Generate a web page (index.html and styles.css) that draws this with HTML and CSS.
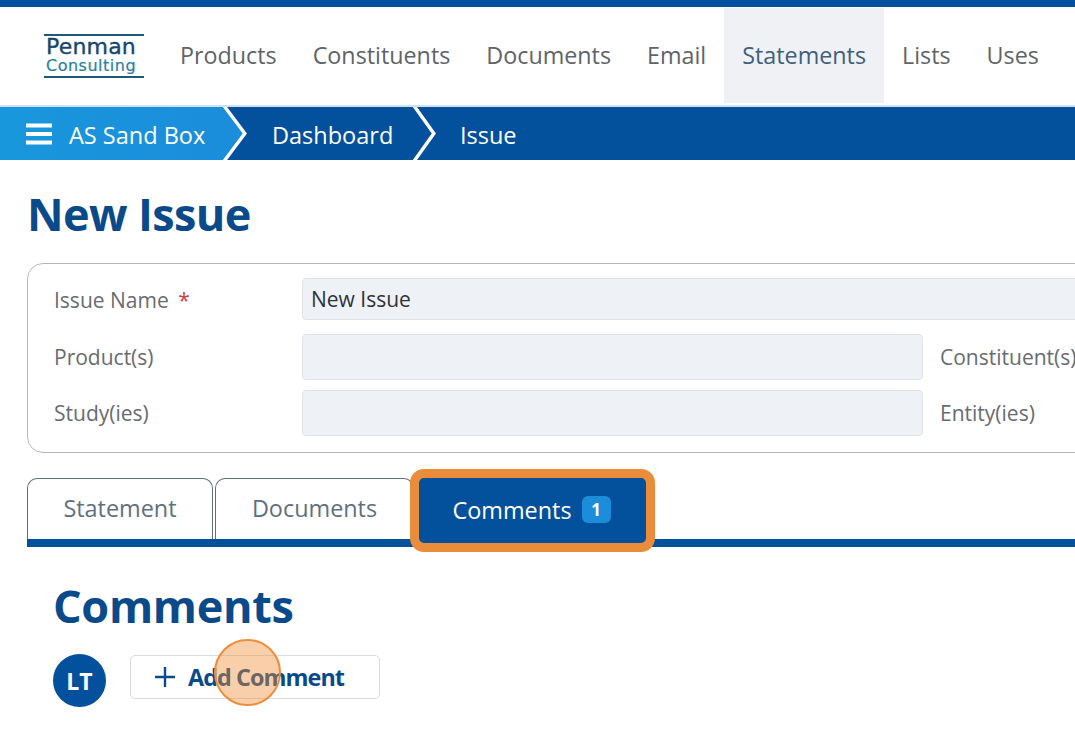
FILE: index.html
```html
<!DOCTYPE html>
<html lang="en">
<head>
<meta charset="utf-8">
<title>New Issue</title>
<link rel="stylesheet" href="styles.css">
</head>
<body>
<div class="page">
  <div class="topbar"></div>
  <header class="header">
    <div class="logo">
      <span class="logo-main">Penman</span>
      <span class="logo-sub">Consulting</span>
    </div>
    <nav class="nav">
      <a class="nav-item">Products</a>
      <a class="nav-item">Constituents</a>
      <a class="nav-item">Documents</a>
      <a class="nav-item">Email</a>
      <a class="nav-item active">Statements</a>
      <a class="nav-item">Lists</a>
      <a class="nav-item">Uses</a>
    </nav>
  </header>
  <div class="crumbs">
    <div class="crumb crumb-home">
      <svg class="burger" width="26" height="22" viewBox="0 0 26 22"><path d="M0 2.500h26M0 11h26M0 19.500h26" stroke="#fff" stroke-width="4" fill="none"/></svg>
      <span>AS Sand Box</span>
      <svg class="chev" width="26" height="54" viewBox="0 0 26 54"><path d="M0 0L0 54L3 54L23 27L3 0Z" fill="#1b8ddb"/><path d="M2 -1L23 27L2 55" stroke="#fff" stroke-width="3.500" fill="none"/></svg>
    </div>
    <div class="crumb crumb-mid">
      <span>Dashboard</span>
      <svg class="chev" width="26" height="54" viewBox="0 0 26 54"><path d="M2 -1L22 27L2 55" stroke="#fff" stroke-width="3.500" fill="none"/></svg>
    </div>
    <div class="crumb crumb-last"><span>Issue</span></div>
  </div>
  <main class="main">
    <h1 class="title">New Issue</h1>
    <section class="card">
      <div class="row row-name">
        <label class="label">Issue Name <span class="req">*</span></label>
        <div class="input input-name">New Issue</div>
      </div>
      <div class="row">
        <label class="label">Product(s)</label>
        <div class="input input-half"></div>
        <label class="label label-right">Constituent(s)</label>
      </div>
      <div class="row">
        <label class="label">Study(ies)</label>
        <div class="input input-half"></div>
        <label class="label label-right">Entity(ies)</label>
      </div>
    </section>
    <div class="tabs">
      <div class="tab tab-statement">Statement</div>
      <div class="tab tab-documents">Documents</div>
      <div class="tab tab-active">Comments <span class="badge">1</span></div>
    </div>
    <section class="comments">
      <h2 class="comments-title">Comments</h2>
      <div class="comment-row">
        <div class="avatar">LT</div>
        <button class="add-btn">
          <svg width="22" height="22" viewBox="0 0 22 22"><path d="M11 1v20M1 11h20" stroke="#0b4a8a" stroke-width="2.400" fill="none"/></svg>
          <span>Add Comment</span>
        </button>
        <div class="click-dot"></div>
      </div>
    </section>
  </main>
</div>
</body>
</html>
```

FILE: styles.css
```css
* { box-sizing: border-box; }
html, body { margin: 0; padding: 0; }
body {
  width: 1075px;
  height: 733px;
  overflow: hidden;
  background: #fff;
  font-family: "Open Sans", "Liberation Sans", sans-serif;
}
.page { width: 1075px; height: 733px; overflow: hidden; }
.topbar { height: 7px; background: #03519c; }
.header {
  height: 98px;
  display: flex;
  align-items: stretch;
  padding-left: 44px;
  background: #fff;
  white-space: nowrap;
}
.logo {
  width: 100px;
  height: 44px;
  margin-top: 27px;
  padding-left: 2px;
  border-top: 2px solid #1d5a78;
  border-bottom: 2px solid #1d5a78;
  display: flex;
  flex-direction: column;
  align-items: flex-start;
  font-family: "DejaVu Sans", sans-serif;
}
.logo-main { font-size: 22px; line-height: 20px; height: 20px; color: #17466f; margin-top: 1px; letter-spacing: .2px; -webkit-text-stroke: .35px #17466f; }
.logo-sub { font-size: 16px; line-height: 18px; height: 18px; color: #2a7f9e; letter-spacing: .5px; -webkit-text-stroke: .2px #2a7f9e; }
.nav { display: flex; margin-left: 18px; }
.nav-item {
  font-size: 23.300px;
  color: #5f6468;
  padding: 0 18px 2px;
  display: flex;
  align-items: center;
  height: 95px;
  margin-top: 1px;
}
.nav-item.active { background: #eff1f5; color: #3f5f7d; }
.crumbs {
  height: 55px;
  border-top: 2px solid #cfe2f3;
  display: flex;
  background: #03519c;
  color: #fff;
  font-size: 23.500px;
  white-space: nowrap;
}
.crumb { display: flex; align-items: center; height: 53px; }
.crumb span { position: relative; top: 1px; }
.crumb-home { width: 248px; padding-left: 26px; background: linear-gradient(90deg, #1897dc 0%, #1b8ddb 100%); background-size: 224px 100%; background-repeat: no-repeat; background-color: #03519c; position: relative; }
.burger { margin-right: 17px; }
.chev { position: absolute; top: 0; height: 53px; }
.crumb-home .chev { left: 222px; }
.crumb-mid { width: 188px; padding-left: 24px; position: relative; }
.crumb-mid .chev { left: 164px; }
.crumb-last { padding-left: 24px; }
.main { padding: 0 0 0 27px; width: 1200px; }
.title {
  margin: 24px 0 0;
  height: 60px;
  line-height: 60px;
  font-size: 45px;
  font-weight: 700;
  color: #0b4a8a;
  letter-spacing: -.6px;
}
.card {
  margin-top: 19px;
  width: 1160px;
  height: 190px;
  border: 1.500px solid #b5b9bd;
  border-radius: 16px;
  padding: 14px 0 0 26px;
  display: flex;
  flex-direction: column;
  gap: 10px;
}
.row { display: flex; align-items: center; height: 46px; }
.row-name { height: 42px; margin-bottom: 4px; }
.label { width: 248px; flex: none; font-size: 21px; color: #686c70; white-space: nowrap; }
.row-name .label { padding-top: 2px; }
.req { color: #c9413f; margin-left: 4px; }
.input { background: #eef1f6; border: 1.500px solid #dfe3e8; border-radius: 4px; height: 100%; }
.input-name { width: 820px; padding: 0 0 0 8px; font-size: 21px; color: #2e3338; display: flex; align-items: center; }
.input-half { width: 621px; flex: none; }
.label-right { margin-left: 17px; width: 200px; }
.tabs {
  margin-top: 25px;
  height: 69px;
  width: 1100px;
  display: flex;
  align-items: flex-start;
  border-bottom: 8px solid #03519c;
  position: relative;
}
.tab {
  height: 61px;
  border: 1.500px solid #5c7080;
  border-bottom: 0;
  border-radius: 10px 10px 0 0;
  font-size: 23.400px;
  color: #607080;
  display: flex;
  align-items: center;
  justify-content: center;
  padding-bottom: 2px;
}
.tab-statement { width: 186px; margin-right: 2px; }
.tab-documents { width: 199px; }
.tab-active {
  position: absolute;
  left: 383px;
  top: -9px;
  width: 245px;
  height: 83px;
  background: #03519c;
  color: #fff;
  border: 9px solid #ea8c3a;
  border-radius: 14px;
  gap: 10px;
  padding: 0 2px 2px 0;
}
.badge {
  width: 29px;
  height: 27px;
  border-radius: 6px;
  background: #1b8ddb;
  color: #fff;
  font-size: 17px;
  font-weight: 700;
  display: flex;
  align-items: center;
  justify-content: center;
}
.comments { padding-left: 26px; }
.comments-title {
  margin: 29px 0 0;
  height: 60px;
  line-height: 60px;
  font-size: 45px;
  font-weight: 700;
  color: #0b4a8a;
  letter-spacing: -.3px;
}
.comment-row { display: flex; align-items: flex-start; gap: 24px; margin-top: 18px; position: relative; }
.avatar {
  width: 53px;
  height: 53px;
  border-radius: 50%;
  background: #03519c;
  color: #fff;
  font-size: 23px;
  font-weight: 700;
  display: flex;
  align-items: center;
  justify-content: center;
}
.add-btn {
  width: 250px;
  height: 44px;
  margin-top: 1px;
  background: #fff;
  border: 1.500px solid #d8dce0;
  border-radius: 5px;
  display: flex;
  align-items: center;
  gap: 12px;
  padding: 0 0 0 23px;
  font-family: inherit;
  font-size: 23.400px;
  font-weight: 700;
  color: #0b4a8a;
  letter-spacing: -.95px;
  white-space: nowrap;
}
.click-dot {
  position: absolute;
  left: 161px;
  top: -15px;
  width: 67px;
  height: 67px;
  border-radius: 50%;
  background: rgba(240, 140, 50, .42);
  border: 2.500px solid #ee8d3c;
}
```
